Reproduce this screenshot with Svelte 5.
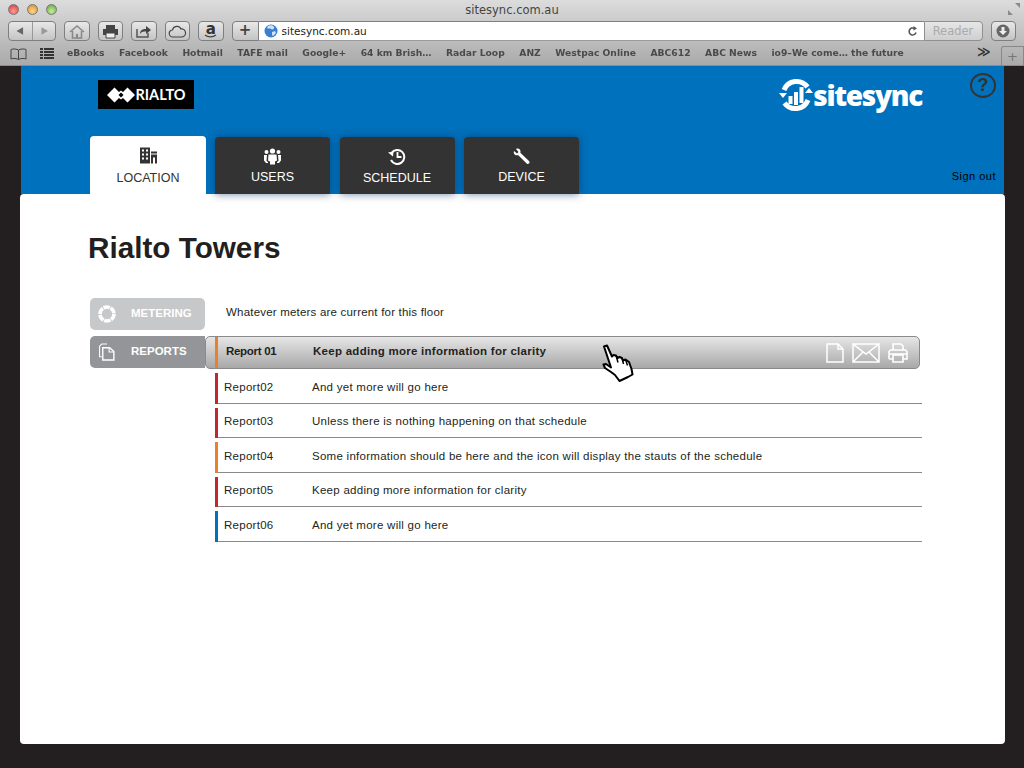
<script>
  const bookmarks = ["eBooks", "Facebook", "Hotmail", "TAFE mail", "Google+", "64 km Brish…", "Radar Loop", "ANZ", "Westpac Online", "ABC612", "ABC News", "io9–We come… the future"];
  const rows = [
    { id: "Report02", text: "And yet more will go here", color: "#c1272d" },
    { id: "Report03", text: "Unless there is nothing happening on that schedule", color: "#c1272d" },
    { id: "Report04", text: "Some information should be here and the icon will display the stauts of the schedule", color: "#e8812a" },
    { id: "Report05", text: "Keep adding more information for clarity", color: "#c1272d" },
    { id: "Report06", text: "And yet more will go here", color: "#0071bc" }
  ];
</script>

<div class="chrome">
  <div class="titlebar">
    <div class="lights"><i class="red"></i><i class="amber"></i><i class="green"></i></div>
    <span class="title">sitesync.com.au</span>
    <svg class="expand" width="14" height="14" viewBox="0 0 14 14"><path d="M8 1h5v5zM6 13H1V8z" fill="#8a8a8a"/></svg>
  </div>
  <div class="toolbar">
    <div class="btn nav">
      <svg width="24" height="18" viewBox="0 0 24 18"><path d="M8 9l7-4v8z" fill="#666"/></svg>
      <svg width="24" height="18" viewBox="0 0 24 18"><path d="M16 9L9 5v8z" fill="#999"/></svg>
    </div>
    <div class="btn">
      <svg width="16" height="15" viewBox="0 0 16 15"><path d="M1 8l7-6 7 6M3.500 7v7h9V7" fill="none" stroke="#888" stroke-width="1.500"/><path d="M7 10h2v4H7z" fill="#888"/></svg>
    </div>
    <div class="btn">
      <svg width="17" height="15" viewBox="0 0 17 15"><path d="M4 1h9v4H4zM1 5h15v6H1z" fill="#444"/><path d="M4 9h9v5H4z" fill="#eee" stroke="#444"/></svg>
    </div>
    <div class="btn">
      <svg width="17" height="15" viewBox="0 0 17 15"><path d="M2 5v8h11V9" fill="none" stroke="#555" stroke-width="1.500"/><path d="M5 10c0-4 3-5 6-5V2l5 4-5 4V7.500c-3 0-5 .5-6 2.500z" fill="#444"/></svg>
    </div>
    <div class="btn">
      <svg width="19" height="13" viewBox="0 0 19 13"><path d="M5 12a3.500 3.500 0 0 1-.5-7A4.500 4.500 0 0 1 13 4a4 4 0 0 1 1 8z" fill="none" stroke="#444" stroke-width="1.200"/></svg>
    </div>
    <div class="btn amazon">
      <span>a</span>
      <svg width="13" height="4" viewBox="0 0 13 4"><path d="M1 1c3 2.500 8 2.500 11 0" fill="none" stroke="#444" stroke-width="1.200"/></svg>
    </div>
    <div class="address">
      <div class="plus">+</div>
      <div class="url">
        <svg width="14" height="14" viewBox="0 0 14 14"><circle cx="7" cy="7" r="6.500" fill="#3a7fd0"/><path d="M4 2c2-1 5-1 6 1S8 6 7 5 4 5 3 4zM8 8l3-1 1 2-3 3-1-1z" fill="#cfe3f7"/></svg>
        <span>sitesync.com.au</span>
        <svg class="reload" width="11" height="11" viewBox="0 0 11 11"><path d="M9 6.500A3.500 3.500 0 1 1 7.500 2.500" fill="none" stroke="#555" stroke-width="1.600"/><path d="M6.500 0l3.500 2.500-3.500 2z" fill="#555"/></svg>
      </div>
      <div class="reader">Reader</div>
    </div>
    <div class="btn download">
      <svg width="14" height="14" viewBox="0 0 14 14"><circle cx="7" cy="7" r="6.500" fill="#666"/><path d="M5.500 3h3v4H11l-4 4-4-4h2.500z" fill="#eee"/></svg>
    </div>
  </div>
  <div class="bookmarks">
    <svg width="17" height="12" viewBox="0 0 17 12"><path d="M8.500 2C7 1 3 .5 1 1.500V11c2-1 6-.5 7.500 .5 1.500-1 5.500-1.500 7.500-.5V1.500C14 .5 10 1 8.500 2zM8.500 2v9.500" fill="none" stroke="#444"/></svg>
    <svg class="grid" width="14" height="11" viewBox="0 0 14 11"><path d="M0 0h3v2H0zM4 0h10v2H4zM0 3h3v2H0zM4 3h10v2H4zM0 6h3v2H0zM4 6h10v2H4zM0 9h3v2H0zM4 9h10v2H4z" fill="#333"/></svg>
    <div class="marks">
      {#each bookmarks as mark}
        <span>{mark}</span>
      {/each}
    </div>
    <span class="more">≫</span>
    <div class="newtab">+</div>
  </div>
</div>

<div class="page">
  <header>
    <div class="top">
      <div class="rialto">
        <svg width="28" height="22" viewBox="0 0 28 22"><path d="M0 11l7.500-7.500 4.500 4.500 2-1.500 2 1.500 4.500-4.500L28 11l-7.500 7.500L16 14l-2 1.500-2-1.500-4.500 4.500z" fill="#fff"/><path d="M11.500 11l2.500-2.500 2.500 2.500-2.500 2.500z" fill="#000"/></svg>
        <span>RIALTO</span>
      </div>
      <div class="sitesync">
        <svg width="34" height="34" viewBox="0 0 34 34">
          <path d="M5 12A13.500 13.500 0 0 1 28.500 9" fill="none" stroke="#fff" stroke-width="5"/>
          <path d="M29 22A13.500 13.500 0 0 1 5.500 25" fill="none" stroke="#fff" stroke-width="5"/>
          <path d="M0 15h8l-4 5zM26 15h8l-4 -5z" fill="#fff"/>
          <path d="M9.500 18h4v8h-4zM15 14h4v13h-4zM20.500 9h4v16h-4z" fill="#fff"/>
        </svg>
        <span>sitesync</span>
      </div>
      <div class="help">?</div>
    </div>
    <nav>
      <div class="tab active">
        <svg width="17" height="16" viewBox="0 0 17 16">
          <path d="M0 0h10v16H0z" fill="#333"/>
          <path d="M2 2h2v2H2zM6 2h2v2H6zM2 6h2v2H2zM6 6h2v2H6zM2 10h2v2H2zM6 10h2v2H6z" fill="#fff"/>
          <path d="M11 4h6v2h-6zM11 7h6v9h-2v-6h-2v6h-2z" fill="#333"/>
        </svg>
        <span>LOCATION</span>
      </div>
      <div class="tab">
        <svg width="19" height="17" viewBox="0 0 19 17">
          <circle cx="9.500" cy="3" r="2.600" fill="#fff"/><circle cx="3.500" cy="4" r="2" fill="#fff"/><circle cx="15.500" cy="4" r="2" fill="#fff"/>
          <path d="M5.500 6.500h8l.5 6-2 1v3H7v-3l-2-1z" fill="#fff"/>
          <path d="M1 7h3l-.5 6 1.500 1v1H3l-2-2.500zM18 7h-3l.5 6-1.500 1v1h2l2-2.500z" fill="#fff"/>
        </svg>
        <span>USERS</span>
      </div>
      <div class="tab sched">
        <svg width="18" height="17" viewBox="0 0 18 17">
          <path d="M3.500 5A7 7 0 1 1 3 12" fill="none" stroke="#fff" stroke-width="2"/>
          <path d="M0 4.500l5.500 -1-.5 5z" fill="#fff"/>
          <path d="M9.500 4v5h4" fill="none" stroke="#fff" stroke-width="1.800"/>
        </svg>
        <span>SCHEDULE</span>
      </div>
      <div class="tab">
        <svg width="17" height="17" viewBox="0 0 17 17">
          <path d="M1 3l3 2.500L5.500 4 3 1C5 0 7.500 1 7.500 3.500c0 .5 0 1-.2 1.300l8.700 8.200c1 1 .5 1.800 0 2.500-.6.500-1.500.8-2.300 0L5 7c-2.500 1-5-1-4-4z" fill="#fff"/>
        </svg>
        <span>DEVICE</span>
      </div>
      <a class="signout" href="#top">Sign out</a>
    </nav>
  </header>

  <main>
    <h1>Rialto Towers</h1>
    <div class="content">
      <aside>
        <div class="side metering">
          <svg width="18" height="18" viewBox="0 0 18 18"><circle cx="9" cy="9" r="7" fill="none" stroke="#fff" stroke-width="3.500" stroke-dasharray="6.500 .8"/></svg>
          <span>METERING</span>
        </div>
        <div class="side reports">
          <svg width="18" height="18" viewBox="0 0 16 17"><path d="M3 13H1V3l2-2h5" fill="none" stroke="#fff"/><path d="M4 4.500h6.500L14.500 8v8H4z" fill="none" stroke="#fff" stroke-width="1.300"/><path d="M10 4.500V8.500h4.500" fill="none" stroke="#fff"/></svg>
          <span>REPORTS</span>
        </div>
      </aside>
      <section>
        <p class="note">Whatever meters are current for this floor</p>
        <div class="selected">
          <div class="inner">
            <b class="id">Report 01</b>
            <b class="desc">Keep adding more information for clarity</b>
            <div class="actions">
              <svg width="18" height="20" viewBox="0 0 18 20"><path d="M1 1h11l5 5v13H1zM12 1v5h5" fill="none" stroke="#fff" stroke-width="1.500"/></svg>
              <svg width="28" height="20" viewBox="0 0 28 20"><path d="M1 1h26v18H1zM1 1l13 10L27 1M1 19l10-10M27 19L17 9" fill="none" stroke="#fff" stroke-width="1.500"/></svg>
              <svg width="20" height="20" viewBox="0 0 20 20"><path d="M5 7V1h8l2 2v4M1 16V8.500L2.500 7h15L19 8.500V16h-4M5 16H1M5 12h10v7H5zM1 11h18" fill="none" stroke="#fff" stroke-width="1.600"/></svg>
            </div>
          </div>
        </div>
        <ul>
          {#each rows as row}
            <li>
              <i style="background:{row.color}"></i>
              <span class="id">{row.id}</span>
              <span class="desc">{row.text}</span>
            </li>
          {/each}
        </ul>
        <svg class="cursor" width="33" height="38" viewBox="0 0 33 38">
          <path d="M2 2.500 5 1.500 10 12.500 11.500 11 14 11.500 15.500 14 17.500 13 20 14 21 16.500 23.500 15.500 27 18 29.500 25 30.500 30.500 26 33 17.500 37 13 31 9 28 3 24 1.500 20.500 4 20 9 23.500z" fill="#fff" stroke="#000" stroke-width="2" stroke-linejoin="round"/>
          <path d="M14 11.500l2 7M20 14l1.500 6M23.500 15.500l2 6" fill="none" stroke="#000" stroke-width="1.500"/>
        </svg>
      </section>
    </div>
  </main>
</div>

<style>
  :global(body) {
    background: #231f20;
    font-family: "Liberation Sans", Arial, sans-serif;
    overflow: hidden;
  }

  .chrome {
    height: 66px;
    background: linear-gradient(#dcdcdc, #a9a9a9);
    font-family: "DejaVu Sans", sans-serif;
    color: #333;
    display: flex;
    flex-direction: column;
    overflow: hidden;
  }

  .titlebar {
    height: 21px;
    flex: none;
    display: flex;
    align-items: center;
    justify-content: center;
    position: relative;
  }

  .title {
    font-size: 11.500px;
    color: #444;
    margin-top: -2px;
  }

  .lights {
    position: absolute;
    left: 8px;
    top: 4px;
    display: flex;
    gap: 8px;
  }

  .lights i {
    width: 11px;
    height: 11px;
    border-radius: 50%;
    border: 0.5px solid #777;
    box-sizing: border-box;
  }

  .red { background: radial-gradient(circle at 50% 70%, #ff9a98, #d8363a); }
  .amber { background: radial-gradient(circle at 50% 70%, #fbd98b, #d98a1e); }
  .green { background: radial-gradient(circle at 50% 70%, #c6eb9c, #62a63e); }

  .expand {
    position: absolute;
    right: 3px;
    top: 2px;
  }

  .toolbar {
    height: 21px;
    flex: none;
    display: flex;
    padding-left: 8px;
    padding-right: 8px;
    gap: 8px;
    align-items: flex-start;
  }

  .btn {
    width: 25.500px;
    height: 20px;
    box-sizing: border-box;
    border: 1px solid #7f7f7f;
    border-radius: 4px;
    background: linear-gradient(#e8e8e8, #c4c4c4);
    display: flex;
    flex-direction: column;
    align-items: center;
    justify-content: center;
    flex: none;
  }

  .nav {
    width: 48px;
    flex-direction: row;
    padding: 0;
  }

  .nav svg:first-child {
    border-right: 1px solid #999;
  }

  .amazon {
    line-height: 10px;
    gap: 0;
    font-weight: bold;
    font-size: 15px;
  }

  .address {
    flex: 1;
    display: flex;
    height: 20px;
    align-items: stretch;
  }

  .plus {
    width: 27px;
    box-sizing: border-box;
    border: 1px solid #7f7f7f;
    border-radius: 4px 0 0 4px;
    background: linear-gradient(#e8e8e8, #c4c4c4);
    font-size: 15px;
    font-weight: bold;
    text-align: center;
    line-height: 16px;
    color: #444;
  }

  .url {
    flex: 1;
    background: #fff;
    border-top: 1px solid #7f7f7f;
    border-bottom: 1px solid #9a9a9a;
    display: flex;
    align-items: center;
    padding-left: 5px;
    gap: 4px;
    font-size: 10.500px;
    color: #222;
  }

  .reload {
    margin-left: auto;
    margin-right: 6px;
  }

  .reader {
    width: 59px;
    box-sizing: border-box;
    border: 1px solid #8f8f8f;
    border-radius: 0 4px 4px 0;
    background: linear-gradient(#e6e6e6, #cfcfcf);
    color: #aaa;
    font-size: 11.500px;
    text-align: center;
    line-height: 18px;
  }

  .bookmarks {
    height: 24px;
    flex: none;
    display: flex;
    align-items: center;
    padding-left: 10px;
    border-bottom: 1px solid #8a8a8a;
    box-sizing: border-box;
    position: relative;
  }

  .grid {
    margin-left: 13px;
  }

  .marks {
    display: flex;
    gap: 14.500px;
    margin-left: 13px;
    margin-top: -2px;
    font-size: 9.200px;
    font-weight: bold;
    color: #4a4a4a;
    white-space: nowrap;
    filter: blur(0.3px);
  }

  .more {
    position: absolute;
    left: 977px;
    top: 2px;
    font-size: 13px;
    font-weight: bold;
  }

  .newtab {
    position: absolute;
    left: 1001px;
    top: 4px;
    width: 23px;
    height: 20px;
    box-sizing: border-box;
    border: 1px solid #888;
    border-bottom: 0;
    border-radius: 3px 0 0 0;
    font-size: 13px;
    text-align: center;
    line-height: 19px;
    color: #777;
  }

  .page {
    width: 985px;
    margin-left: 20px;
  }

  header {
    height: 128px;
    margin: 0 1px;
    background: #0071bc;
    display: flex;
    flex-direction: column;
    justify-content: space-between;
  }

  .top {
    display: flex;
    align-items: flex-start;
    padding: 7px 8px 0 77px;
  }

  .rialto {
    width: 96px;
    height: 29px;
    margin-top: 7px;
    background: #000;
    color: #fff;
    display: flex;
    align-items: center;
    justify-content: center;
    gap: 1px;
    font-family: Lato, sans-serif;
    font-weight: 700;
    font-size: 14.500px;
  }

  .sitesync {
    margin-left: auto;
    margin-top: 5px;
    display: flex;
    align-items: center;
    gap: 0;
    color: #fff;
    font-family: "Open Sans", sans-serif;
    font-weight: 800;
    font-size: 28px;
    letter-spacing: -1.300px;
    line-height: 34px;
  }

  .help {
    margin-left: 48px;
    width: 26px;
    height: 25px;
    box-sizing: border-box;
    border: 2px solid #333;
    border-radius: 50%;
    color: #333;
    font-weight: bold;
    font-size: 18px;
    text-align: center;
    line-height: 21px;
  }

  nav {
    display: flex;
    align-items: flex-end;
    padding-left: 69px;
    padding-right: 8px;
  }

  .tab {
    width: 115px;
    height: 57px;
    margin-right: 9.500px;
    box-sizing: border-box;
    padding-top: 11px;
    background: #333;
    color: #fff;
    border-radius: 4px 4px 0 0;
    box-shadow: 0 0 8px rgba(0, 50, 100, 0.6);
    display: flex;
    flex-direction: column;
    align-items: center;
    gap: 5px;
    font-size: 12.500px;
    line-height: 15px;
  }

  .tab svg {
    height: 17px;
  }

  .active {
    width: 116px;
    height: 58px;
    margin-right: 9px;
    background: #fff;
    color: #333;
    box-shadow: none;
    gap: 7px;
  }

  .sched {
    gap: 6px;
  }

  .signout {
    margin-left: auto;
    margin-bottom: 12px;
    font-size: 11px;
    color: #000;
    text-decoration: none;
    letter-spacing: 0.5px;
  }

  main {
    height: 550px;
    background: #fff;
    border-radius: 4px;
    box-sizing: border-box;
    padding: 34px 84px 0 68px;
  }

  h1 {
    margin: 0;
    font-size: 29.700px;
    line-height: 40px;
    font-weight: bold;
    color: #231f20;
  }

  .content {
    display: flex;
    margin-top: 30px;
    padding-left: 2px;
  }

  aside {
    width: 115px;
    flex: none;
    display: flex;
    flex-direction: column;
    gap: 6px;
  }

  .side {
    height: 32px;
    border-radius: 5px;
    display: flex;
    align-items: center;
    padding-left: 8px;
    gap: 15px;
    color: #fff;
    font-size: 11.500px;
    font-weight: bold;
  }

  .side span {
    margin-top: -3px;
  }

  .metering { background: #c7c8ca; }

  .reports {
    background: #939598;
    border-radius: 5px 0 0 5px;
  }

  section {
    flex: 1;
    position: relative;
  }

  .note {
    margin: 0;
    height: 38px;
    padding-left: 21px;
    box-sizing: border-box;
    padding-top: 7px;
    font-size: 11.500px;
    letter-spacing: 0.2px;
    line-height: 14px;
    color: #231f20;
  }

  .selected {
    height: 33px;
    width: 715px;
    box-sizing: border-box;
    border: 1px solid #8a8a8a;
    border-radius: 5px;
    background: linear-gradient(#e6e6e6, #a8a8a8);
  }

  .inner {
    margin-left: 9px;
    height: 100%;
    border-left: 3px solid #e8812a;
    display: flex;
    align-items: center;
    font-size: 11.500px;
    color: #231f20;
  }

  .inner .id {
    width: 95px;
    padding-left: 8px;
    box-sizing: border-box;
    flex: none;
    letter-spacing: -0.3px;
  }

  .inner b {
    margin-top: -3px;
  }

  .inner .desc {
    letter-spacing: 0.27px;
  }

  .actions {
    margin-left: auto;
    margin-right: 11px;
    display: flex;
    gap: 8px;
    align-items: center;
  }

  ul {
    list-style: none;
    margin: 0;
    padding: 0 0 0 10px;
    width: 707px;
  }

  li {
    margin-top: 4px;
    height: 30.500px;
    box-sizing: border-box;
    display: flex;
    align-items: center;
    position: relative;
    padding-left: 9px;
    padding-bottom: 3px;
    font-size: 11.500px;
    letter-spacing: 0.27px;
    color: #231f20;
    background: linear-gradient(#8a8a8a, #8a8a8a) 2px 100% / 100% 1px no-repeat;
  }

  li i {
    position: absolute;
    left: 0;
    top: 0;
    bottom: 0;
    width: 3px;
  }

  li .id {
    width: 88px;
    flex: none;
  }

  .cursor {
    position: absolute;
    left: 397px;
    top: 46px;
  }
</style>
